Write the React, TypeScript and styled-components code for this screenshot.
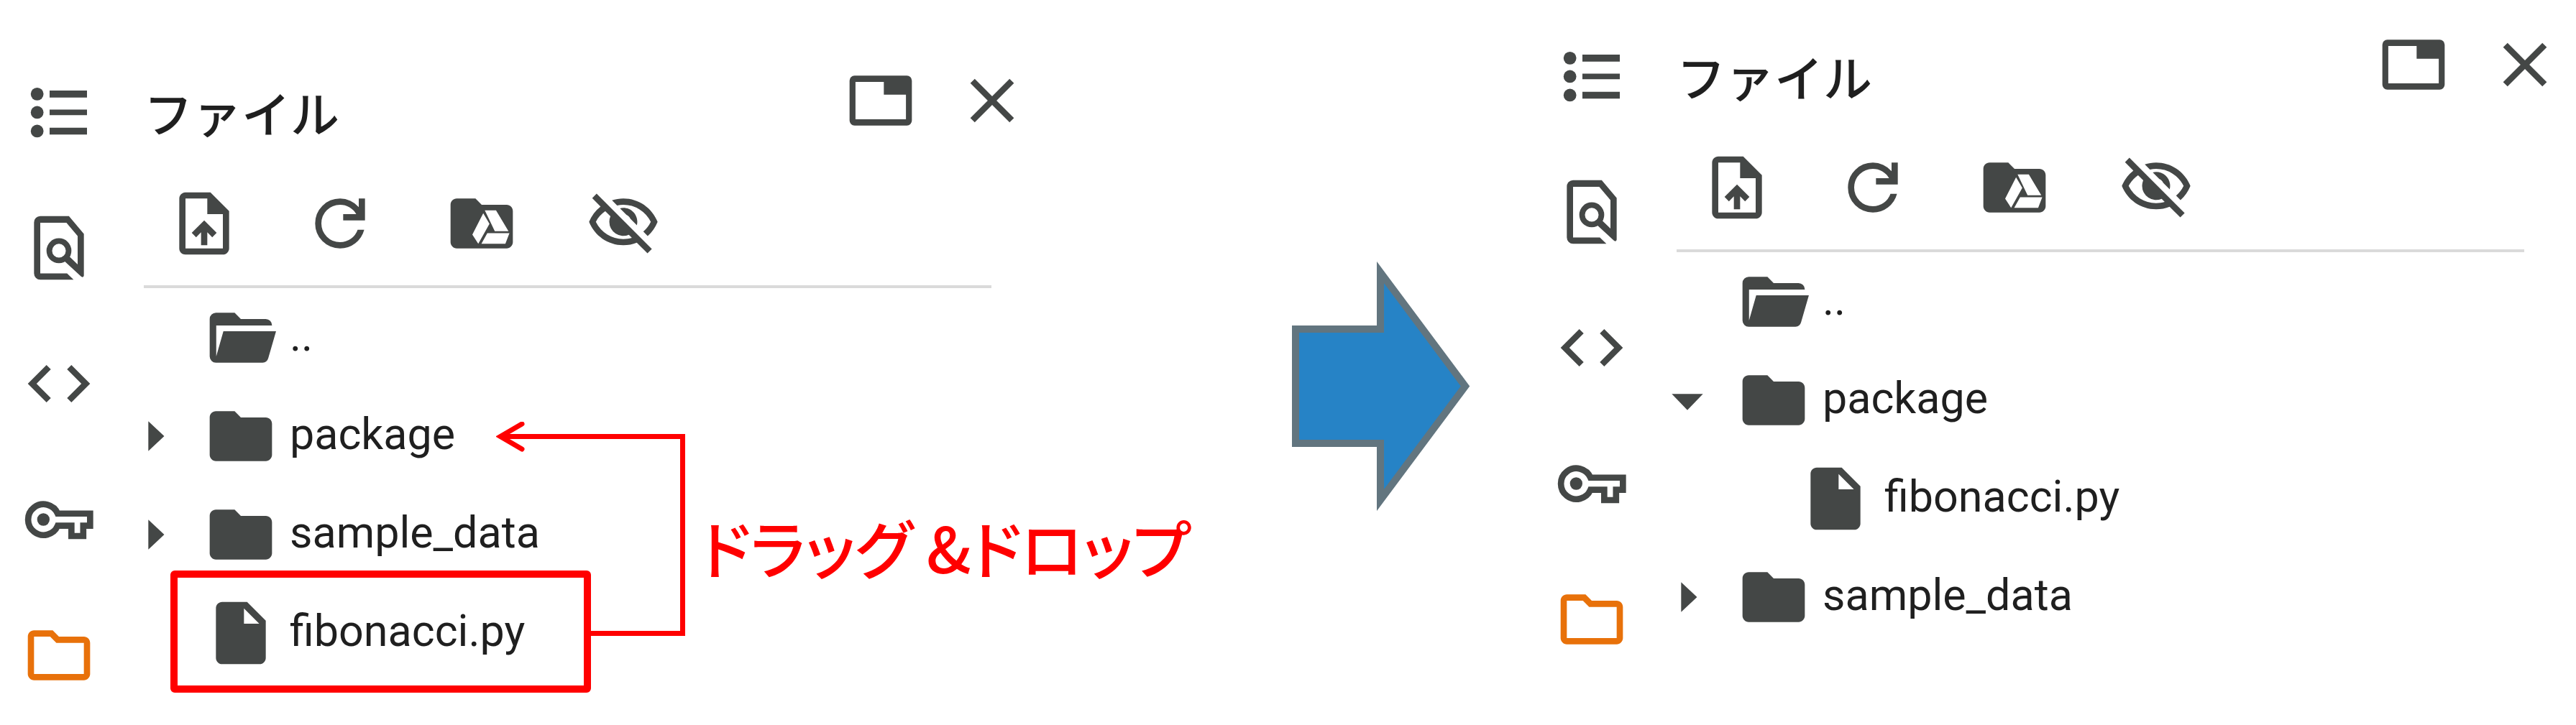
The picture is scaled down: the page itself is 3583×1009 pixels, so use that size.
import React from "react";
import styled, { createGlobalStyle } from "styled-components";

const GlobalStyle = createGlobalStyle`
  *, *::before, *::after { box-sizing: border-box; }
  body {
    margin: 0;
    background: #ffffff;
    color: #1f1f1f;
    font-family: Roboto, "Noto Sans CJK JP", sans-serif;
  }
`;

const INK = "#444746";
const RED = "#ff0000";

/* ---------- icons (24-unit grid) ---------- */

const icons = {
  list: (
    <>
      <circle cx="5" cy="6.2" r="2.05" />
      <circle cx="5" cy="12.1" r="2.05" />
      <circle cx="5" cy="18.1" r="2.05" />
      <path d="M9 5.1h12v2.2H9zM9 11.2h12V13H9zM9 17h12v2.2H9z" />
    </>
  ),
  findInPage: (
    <>
      <path d="M6 1.8H15.2L20 7.5V20.8c0 .5-.5.8-.9.4L13.4 15.9l1.6-1.5 3 2.9V8.2L14.4 3.9H6V20.2H14.6L16.7 22.2H6a2 2 0 0 1-2-2V3.8a2 2 0 0 1 2-2Z" />
      <circle cx="12" cy="12.9" r="3.1" fill="none" stroke="currentColor" strokeWidth="1.8" />
    </>
  ),
  code: (
    <path d="M9.4 16.6 4.8 12l4.6-4.6L8 6l-6 6 6 6 1.4-1.4zm5.2 0 4.6-4.6-4.6-4.6L16 6l6 6-6 6-1.4-1.4z" />
  ),
  key: (
    <>
      <path
        d="M11.6 10.1H22V14h-2.2v3.3H16V14h-4.4A4.95 4.95 0 1 1 11.6 10.1Z"
        fill="none"
        stroke="currentColor"
        strokeWidth="2"
      />
      <circle cx="7" cy="12" r="2" />
    </>
  ),
  folderOutline: (
    <path d="m9.17 6 2 2H20v10H4V6h5.17M10 4H4c-1.1 0-1.99.9-1.99 2L2 18c0 1.1.9 2 2 2h16c1.1 0 2-.9 2-2V8c0-1.1-.9-2-2-2h-8l-2-2z" />
  ),
  tab: (
    <path
      fillRule="evenodd"
      d="M3.6 4h16.8A1.6 1.6 0 0 1 22 5.6v12.8a1.6 1.6 0 0 1-1.6 1.6H3.6A1.6 1.6 0 0 1 2 18.4V5.6A1.6 1.6 0 0 1 3.6 4ZM3.9 6v12h16.2v-7.9H13V6Z"
    />
  ),
  close: (
    <path d="M19 6.41 17.59 5 12 10.59 6.41 5 5 6.41 10.59 12 5 17.59 6.41 19 12 13.41 17.59 19 19 17.59 13.41 12z" />
  ),
  upload: (
    <path d="M14 2H6c-1.1 0-1.99.9-1.99 2L4 20c0 1.1.89 2 1.99 2H18c1.1 0 2-.9 2-2V8l-6-6zm4 18H6V4h7v5h5v11zM8 15.01l1.41 1.41L11 14.84V19h2v-4.16l1.59 1.59L16 15.01 12.01 11 8 15.01z" />
  ),
  refresh: (
    <path d="M12 20q-3.35 0-5.675-2.325T4 12t2.325-5.675T12 4q1.725 0 3.3.713T18 6.75V4h2v7h-7V9h4.2q-.8-1.4-2.187-2.2T12 6Q9.5 6 7.75 7.75T6 12t1.75 4.25T12 18q1.925 0 3.475-1.1T17.65 14h2.1q-.7 2.65-2.85 4.325T12 20" />
  ),
  drive: (
    <>
      <path d="M10 4H4c-1.1 0-2 .9-2 2v12c0 1.1.9 2 2 2h16c1.1 0 2-.9 2-2V8c0-1.1-.9-2-2-2h-8l-2-2z" />
      <path
        fill="#ffffff"
        d="M13 7.8h3.6l4 6.7h-4.4zM12.5 8.7l2 3.4-3.6 6.4-1.9-2.9zM13.8 15.1h7.1l-1.3 3.4h-7.7z"
      />
    </>
  ),
  eyeOff: (
    <path d="M12 6a9.77 9.77 0 0 1 8.82 5.5 9.647 9.647 0 0 1-2.41 3.12l1.41 1.41c1.39-1.23 2.49-2.77 3.18-4.53C21.27 7.11 17 4 12 4c-1.27 0-2.49.2-3.64.57l1.65 1.65C10.66 6.09 11.32 6 12 6zm-1.07 1.14L13 9.21c.57.25 1.03.71 1.28 1.28l2.07 2.07c.08-.34.14-.7.14-1.07C16.5 9.01 14.48 7 12 7c-.37 0-.72.05-1.07.14zM2.01 3.87l2.68 2.68A11.738 11.738 0 0 0 1 11.5C2.73 15.89 7 19 12 19c1.52 0 2.98-.29 4.32-.82l3.42 3.42 1.41-1.41L3.42 2.45 2.01 3.87zM6.11 7.97 7.86 9.72a4.6 4.6 0 0 0-.36 1.78 4.507 4.507 0 0 0 6.27 4.14l.98.98c-.88.24-1.8.38-2.75.38a9.77 9.77 0 0 1-8.82-5.5c.7-1.43 1.79-2.61 3.13-3.53z" />
  ),
  folder: (
    <path d="M10 4H4c-1.1 0-2 .9-2 2v12c0 1.1.9 2 2 2h16c1.1 0 2-.9 2-2V8c0-1.1-.9-2-2-2h-8l-2-2z" />
  ),
  folderOpen: (
    <path d="M4 20a2 2 0 0 1-2-2V6a2 2 0 0 1 2-2h6l2 2h8a2 2 0 0 1 2 2v.1H4.1V18L6.4 9.9H23.3L20.8 18.6Q20.4 20 19 20Z" />
  ),
  file: (
    <path
      fillRule="evenodd"
      d="M14 2H6c-1.1 0-2 .9-2 2v16c0 1.1.9 2 2 2h12c1.1 0 2-.9 2-2V8l-6-6Zm-1 7V4.1L17.9 9Z"
    />
  ),
  right: <path d="M10 16.8 15.1 12 10 7.2z" />,
  down: <path d="m7 10 5 5.2L17 10z" />,
};

type IconName = keyof typeof icons;

const Glyph = styled.svg`
  display: block;
  flex: none;
  width: 104px;
  height: 104px;
  fill: currentColor;
`;

const Icon = ({ name }: { name: IconName }) => (
  <Glyph viewBox="0 0 24 24" aria-hidden="true">
    {icons[name]}
  </Glyph>
);

/* ---------- layout ---------- */

const Page = styled.main`
  display: grid;
  grid-template-columns: minmax(0, 1451fr) minmax(0, 681fr) minmax(0, 1451fr);
  align-items: start;
`;

const Sidebar = styled.section<{ $top: number }>`
  position: relative;
  display: flex;
  align-items: flex-start;
  gap: 29px;
  padding: ${(p) => p.$top}px 19px 0 30px;
`;

const Rail = styled.nav`
  display: flex;
  flex: none;
  flex-direction: column;
  gap: 85px;
  padding-top: 16px;
`;

const IconButton = styled.button<{ $active?: boolean; $width?: number }>`
  display: flex;
  flex: none;
  justify-content: center;
  width: ${(p) => p.$width ?? 104}px;
  padding: 0;
  border: 0;
  background: none;
  color: ${(p) => (p.$active ? "#e8710a" : INK)};
  cursor: pointer;
`;

const Panel = styled.div`
  flex: 1;
  min-width: 0;
`;

const Header = styled.header`
  display: flex;
  align-items: flex-start;
  gap: 51px;
  padding-left: 37px;
`;

const Title = styled.h2`
  flex: 1;
  margin: 0;
  padding: 20px 0 4px;
  font-family: "Noto Sans CJK JP", sans-serif;
  font-size: 68px;
  font-weight: 500;
  line-height: 96px;
`;

const Toolbar = styled.div`
  display: flex;
  gap: 85px;
  margin: 51px 53px 0 37px;
  padding: 0 0 34px 32px;
  border-bottom: 4px solid #dadada;
`;

const Tree = styled.ul`
  position: relative;
  margin: 0;
  padding: 0;
  list-style: none;
`;

const Item = styled.li<{ $nested?: boolean }>`
  position: relative;
  display: flex;
  padding-left: ${(p) => (p.$nested ? 86 : 0)}px;
`;

const Row = styled.button`
  display: flex;
  align-items: center;
  gap: 16px;
  height: 137px;
  padding: 0;
  border: 0;
  background: none;
  color: ${INK};
  font: inherit;
  cursor: pointer;
`;

const Toggle = styled.span`
  flex: none;
  width: 104px;
`;

const Name = styled.span`
  padding-bottom: 6px;
  color: #1f1f1f;
  font-size: 61px;
  line-height: 72px;
  white-space: nowrap;
`;

const Highlight = styled.span`
  position: absolute;
  inset: -18px auto -15px 74px;
  width: 585px;
  border: 10px solid ${RED};
  border-radius: 6px;
  pointer-events: none;
`;

/* ---------- drag and drop note, laid over the tree ---------- */

const Note = styled.div`
  position: absolute;
  top: 186px;
  left: 527px;
  display: flex;
  align-items: center;
  gap: 20px;
  pointer-events: none;
`;

const Connector = styled.svg`
  flex: none;
  width: 264px;
  height: 300px;
  fill: none;
  stroke: ${RED};
  stroke-width: 7;
`;

const NoteText = styled.p`
  margin: 0;
  padding-top: 46px;
  color: ${RED};
  font-family: "Noto Sans CJK JP", sans-serif;
  font-feature-settings: "palt";
  font-size: 88px;
  font-weight: 500;
  line-height: 120px;
  white-space: nowrap;
`;

const Middle = styled.div`
  display: flex;
  justify-content: center;
  padding: 364px 0 0 258px;
`;

const BigArrow = styled.svg`
  flex: none;
  width: 248px;
  height: 347px;
`;

/* ---------- content ---------- */

type Entry = {
  name: string;
  icon: IconName;
  toggle?: IconName;
  nested?: boolean;
  marked?: boolean;
};

const before: Entry[] = [
  { name: "..", icon: "folderOpen" },
  { name: "package", icon: "folder", toggle: "right" },
  { name: "sample_data", icon: "folder", toggle: "right" },
  { name: "fibonacci.py", icon: "file", marked: true },
];

const after: Entry[] = [
  { name: "..", icon: "folderOpen" },
  { name: "package", icon: "folder", toggle: "down" },
  { name: "fibonacci.py", icon: "file", nested: true },
  { name: "sample_data", icon: "folder", toggle: "right" },
];

const railItems: { icon: IconName; label: string }[] = [
  { icon: "list", label: "目次" },
  { icon: "findInPage", label: "検索と置換" },
  { icon: "code", label: "コード スニペット" },
  { icon: "key", label: "シークレット" },
  { icon: "folderOutline", label: "ファイル" },
];

type FileBrowserProps = {
  top: number;
  entries: Entry[];
  children?: React.ReactNode;
};

const FileBrowser = ({ top, entries, children }: FileBrowserProps) => (
  <Sidebar $top={top}>
    <Rail>
      {railItems.map((item) => (
        <IconButton
          key={item.icon}
          type="button"
          aria-label={item.label}
          $active={item.icon === "folderOutline"}
        >
          <Icon name={item.icon} />
        </IconButton>
      ))}
    </Rail>
    <Panel>
      <Header>
        <Title>ファイル</Title>
        <IconButton type="button" aria-label="タブで表示">
          <Icon name="tab" />
        </IconButton>
        <IconButton type="button" aria-label="閉じる">
          <Icon name="close" />
        </IconButton>
      </Header>
      <Toolbar>
        <IconButton type="button" aria-label="アップロード">
          <Icon name="upload" />
        </IconButton>
        <IconButton type="button" aria-label="更新">
          <Icon name="refresh" />
        </IconButton>
        <IconButton type="button" aria-label="ドライブをマウント" $width={120}>
          <Icon name="drive" />
        </IconButton>
        <IconButton type="button" aria-label="隠しファイル">
          <Icon name="eyeOff" />
        </IconButton>
      </Toolbar>
      <Tree>
        {entries.map((entry) => (
          <Item key={entry.name} $nested={entry.nested}>
            <Row type="button">
              <Toggle>{entry.toggle && <Icon name={entry.toggle} />}</Toggle>
              <Icon name={entry.icon} />
              <Name>{entry.name}</Name>
            </Row>
            {entry.marked && <Highlight />}
          </Item>
        ))}
        {children}
      </Tree>
    </Panel>
  </Sidebar>
);

export default function App() {
  return (
    <>
      <GlobalStyle />
      <Page>
        <FileBrowser top={88} entries={before}>
          <Note as="li">
            <Connector viewBox="0 0 264 300" aria-hidden="true">
              <path d="M132 294.500H259.500V20.500H5" />
              <path d="M36 3 6 20.500 36 38" strokeLinecap="round" />
            </Connector>
            <NoteText>ドラッグ &amp;ドロップ</NoteText>
          </Note>
        </FileBrowser>
        <Middle>
          <BigArrow viewBox="0 0 248 347" aria-hidden="true">
            <path
              d="M5 94H123V15L241 173.500 123 332V253H5Z"
              fill="#2683c6"
              stroke="#62757f"
              strokeWidth="10"
            />
          </BigArrow>
        </Middle>
        <FileBrowser top={38} entries={after} />
      </Page>
    </>
  );
}
